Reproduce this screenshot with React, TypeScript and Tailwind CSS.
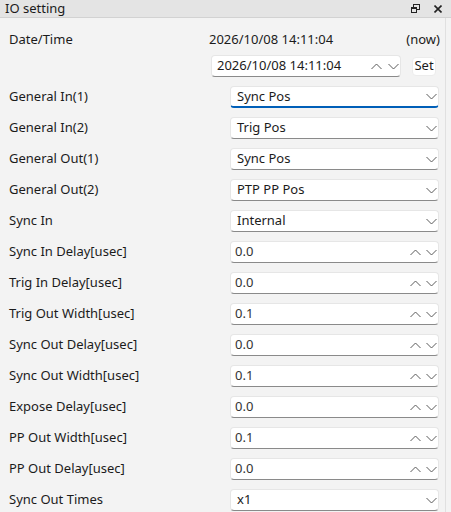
import React from 'react';

const font = { fontFamily: '"Segoe UI", "Noto Sans", sans-serif' };

const ChevronDown = () => (
    <svg width="11" height="7" viewBox="0 0 11 7" className="shrink-0">
        <path d="M0.5 1 L5.5 6 L10.5 1" fill="none" stroke="#5a5a5a" strokeWidth="1" />
    </svg>
);

const ChevronUp = () => (
    <svg width="11" height="7" viewBox="0 0 11 7" className="shrink-0">
        <path d="M0.5 6 L5.5 1 L10.5 6" fill="none" stroke="#5a5a5a" strokeWidth="1" />
    </svg>
);

type Row = { label: string; value: string; kind: 'select' | 'number'; focused?: boolean };

const rows: Row[] = [
    { label: 'General In(1)', value: 'Sync Pos', kind: 'select', focused: true },
    { label: 'General In(2)', value: 'Trig Pos', kind: 'select' },
    { label: 'General Out(1)', value: 'Sync Pos', kind: 'select' },
    { label: 'General Out(2)', value: 'PTP PP Pos', kind: 'select' },
    { label: 'Sync In', value: 'Internal', kind: 'select' },
    { label: 'Sync In Delay[usec]', value: '0.0', kind: 'number' },
    { label: 'Trig In Delay[usec]', value: '0.0', kind: 'number' },
    { label: 'Trig Out Width[usec]', value: '0.1', kind: 'number' },
    { label: 'Sync Out Delay[usec]', value: '0.0', kind: 'number' },
    { label: 'Sync Out Width[usec]', value: '0.1', kind: 'number' },
    { label: 'Expose Delay[usec]', value: '0.0', kind: 'number' },
    { label: 'PP Out Width[usec]', value: '0.1', kind: 'number' },
    { label: 'PP Out Delay[usec]', value: '0.0', kind: 'number' },
    { label: 'Sync Out Times', value: 'x1', kind: 'select' },
];

const Field = ({ row }: { row: Row }) => (
    <div
        className={`relative flex items-center h-[22px] w-[209px] bg-white rounded-[4px] border border-[#e6e6e6] ${
            row.focused ? 'border-b-2 border-b-[#005fb8]' : 'border-b-[#8a8a8a]'
        }`}
    >
        <span className={`flex-1 ${row.kind === 'select' ? 'pl-[6px]' : 'pl-[4px] text-[#333]'}`}>{row.value}</span>
        {row.kind === 'number' ? (
            <div className="flex items-center gap-[5px] pr-[1px]">
                <ChevronUp />
                <ChevronDown />
            </div>
        ) : (
            <div className="pr-[1px]">
                <ChevronDown />
            </div>
        )}
    </div>
);

const App = () => {
    return (
        <div className="w-[451px] h-[512px] bg-[#f3f3f3] text-[13px] text-[#1b1b1b] overflow-hidden flex flex-col" style={font}>
            <div className="h-[18px] bg-[#e4e4e4] border-b border-[#d2d2d2] flex items-center pl-[5px] pr-[9px] leading-none">
                <span className="flex-1 text-[13px]">IO setting</span>
                <svg width="9" height="9" viewBox="0 0 9 9" className="mr-[14px]">
                    <rect x="2.5" y="0.5" width="6" height="5" fill="none" stroke="#222" />
                    <rect x="0.5" y="3.5" width="5" height="5" fill="#e4e4e4" stroke="#222" />
                    <line x1="0.5" y1="4.5" x2="5.5" y2="4.5" stroke="#222" />
                </svg>
                <svg width="8" height="8" viewBox="0 0 8 8">
                    <path d="M0.5 0.5 L7.5 7.5 M7.5 0.5 L0.5 7.5" stroke="#222" strokeWidth="1.6" />
                </svg>
            </div>
            <div className="flex flex-1">
                <div className="w-[446px] border-r border-[#e0e0e0] pt-[11px]">
                    <div className="flex items-center h-[22px] pl-[9px]">
                        <span className="w-[200px]">Date/Time</span>
                        <span className="flex-1">2026/10/08 14:11:04</span>
                        <span className="pr-[5px]">(now)</span>
                    </div>
                    <div className="flex items-center mt-[4px] pl-[211px]">
                        <div className="flex items-center h-[22px] w-[190px] bg-white rounded-[4px] border border-[#e6e6e6] border-b-[#8a8a8a]">
                            <span className="flex-1 pl-[5px]">2026/10/08 14:11:04</span>
                            <div className="flex items-center gap-[6px] pr-[1px]">
                                <ChevronUp />
                                <ChevronDown />
                            </div>
                        </div>
                        <button className="ml-[11px] h-[19px] w-[24px] bg-white rounded-[4px] border border-[#ececec] flex items-center justify-center">
                            Set
                        </button>
                    </div>
                    <div className="flex flex-col gap-[9px] mt-[9px]">
                        {rows.map((row) => (
                            <div key={row.label} className="flex items-center pl-[9px]">
                                <span className="w-[221px]">{row.label}</span>
                                <Field row={row} />
                            </div>
                        ))}
                    </div>
                </div>
                <div className="flex-1 bg-[#f3f3f3]" />
            </div>
        </div>
    );
};

export default App;
